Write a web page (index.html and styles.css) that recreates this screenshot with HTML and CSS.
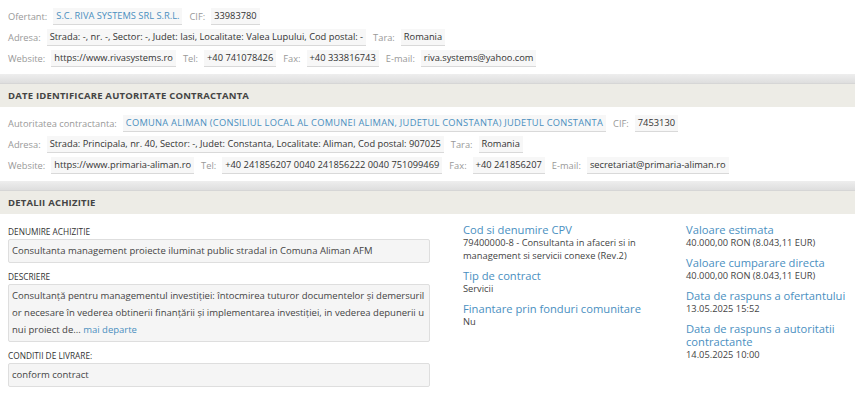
FILE: index.html
```html
<!DOCTYPE html>
<html lang="ro">
<head>
  <meta charset="UTF-8" />
  <title>Detalii achizitie</title>
  <link rel="stylesheet" href="styles.css">
</head>
<body>
<div class="party">
  <div class="row">
    <span class="lbl">Ofertant:</span> <span class="val link">S.C. RIVA SYSTEMS SRL S.R.L.</span>
    <span class="lbl">CIF:</span> <span class="val">33983780</span>
  </div>
  <div class="row">
    <span class="lbl">Adresa:</span> <span class="val">Strada: -, nr. -, Sector: -, Judet: Iasi, Localitate: Valea Lupului, Cod postal: -</span>
    <span class="lbl">Tara:</span> <span class="val">Romania</span>
  </div>
  <div class="row">
    <span class="lbl">Website:</span> <span class="val">https://www.rivasystems.ro</span>
    <span class="lbl">Tel:</span> <span class="val">+40 741078426</span>
    <span class="lbl">Fax:</span> <span class="val">+40 333816743</span>
    <span class="lbl">E-mail:</span> <span class="val">riva.systems@yahoo.com</span>
  </div>
</div>
<div class="divider"></div>
<div class="section-head">DATE IDENTIFICARE AUTORITATE CONTRACTANTA</div>
<div class="party">
  <div class="row">
    <span class="lbl">Autoritatea contractanta:</span> <span class="val link wide">COMUNA ALIMAN (CONSILIUL LOCAL AL COMUNEI ALIMAN, JUDETUL CONSTANTA) JUDETUL CONSTANTA</span>
    <span class="lbl">CIF:</span> <span class="val">7453130</span>
  </div>
  <div class="row">
    <span class="lbl">Adresa:</span> <span class="val">Strada: Principala, nr. 40, Sector: -, Judet: Constanta, Localitate: Aliman, Cod postal: 907025</span>
    <span class="lbl">Tara:</span> <span class="val">Romania</span>
  </div>
  <div class="row">
    <span class="lbl">Website:</span> <span class="val">https://www.primaria-aliman.ro</span>
    <span class="lbl">Tel:</span> <span class="val">+40 241856207 0040 241856222 0040 751099469</span>
    <span class="lbl">Fax:</span> <span class="val">+40 241856207</span>
    <span class="lbl">E-mail:</span> <span class="val">secretariat@primaria-aliman.ro</span>
  </div>
</div>
<div class="divider"></div>
<div class="section-head">DETALII ACHIZITIE</div>
<div class="details">
  <div class="main-col">
    <div class="field-title">DENUMIRE ACHIZITIE</div>
    <div class="box">Consultanta management proiecte iluminat public stradal in Comuna Aliman AFM</div>
    <div class="field-title">DESCRIERE</div>
    <div class="box box-long">Consultanță pentru managementul investiției: întocmirea tuturor documentelor și demersurilor necesare în vederea obtinerii finanțării și implementarea investiției, in vederea depunerii unui proiect de... <span class="link">mai departe</span></div>
    <div class="field-title">CONDITII DE LIVRARE:</div>
    <div class="box">conform contract</div>
  </div>
  <div class="info-col">
    <div class="info">
      <div class="info-title">Cod si denumire CPV</div>
      <div class="info-text">79400000-8 - Consultanta in afaceri si in management si servicii conexe (Rev.2)</div>
    </div>
    <div class="info">
      <div class="info-title">Tip de contract</div>
      <div class="info-text">Servicii</div>
    </div>
    <div class="info">
      <div class="info-title">Finantare prin fonduri comunitare</div>
      <div class="info-text">Nu</div>
    </div>
  </div>
  <div class="info-col info-col-last">
    <div class="info">
      <div class="info-title">Valoare estimata</div>
      <div class="info-text">40.000,00 RON (8.043,11 EUR)</div>
    </div>
    <div class="info">
      <div class="info-title">Valoare cumparare directa</div>
      <div class="info-text">40.000,00 RON (8.043,11 EUR)</div>
    </div>
    <div class="info">
      <div class="info-title">Data de raspuns a ofertantului</div>
      <div class="info-text">13.05.2025 15:52</div>
    </div>
    <div class="info">
      <div class="info-title">Data de raspuns a autoritatii contractante</div>
      <div class="info-text">14.05.2025 10:00</div>
    </div>
  </div>
</div>
</body>
</html>
```

FILE: styles.css
```css
* { box-sizing: border-box; }
body {
  margin: 0;
  font-family: 'Open Sans', sans-serif;
  font-size: 9.3px;
  color: #333;
  background: #fff;
}
.party {
  padding: 6px 8px 5px;
}
.row {
  display: flex;
  align-items: center;
  white-space: nowrap;
  height: 21px;
}
.lbl {
  color: #999;
  margin-right: 6px;
}
.val {
  background: #f7f7f7;
  border-bottom: 1px solid #d9d9d9;
  padding: 1px 3px 2px;
  margin-right: 7px;
  line-height: 13px;
}
.link {
  color: #4a8fbf;
}
.wide {
  letter-spacing: 0.25px;
}
.divider {
  height: 10px;
  background: linear-gradient(#eeeeee, #dedede);
  border-bottom: 1px solid #d6d6d6;
}
.section-head {
  background: #edece6;
  height: 23px;
  line-height: 23px;
  padding-left: 8px;
  font-weight: 700;
  font-size: 9.5px;
  letter-spacing: 0.2px;
  color: #444;
}
.details {
  display: flex;
  padding: 7px 8px 0;
}
.main-col {
  flex-shrink: 0;
  width: 422px;
  margin-right: 33px;
  padding-top: 6px;
}
.field-title {
  font-size: 8.3px;
  line-height: 10px;
  color: #333;
  margin: 9px 0 2px;
}
.field-title:first-child {
  margin-top: 0;
}
.box {
  background: #f5f5f5;
  border: 1px solid #dedede;
  border-radius: 2px;
  padding: 3px 3px 4px;
  font-size: 9.5px;
  line-height: 15px;
  color: #444;
}
.box-long {
  line-height: 17px;
  padding: 2px 4px 3px 3px;
  word-break: break-all;
}
.info-col {
  flex-shrink: 0;
  width: 223px;
  padding-top: 2px;
}
.info-col-last {
  flex: 1;
  width: auto;
}
.info {
  margin-bottom: 7px;
}
.info-title {
  color: #4a8fbf;
  font-size: 11.2px;
  line-height: 13px;
}
.info-text {
  font-size: 9.3px;
  line-height: 13px;
  color: #444;
  padding-right: 25px;
}
```
